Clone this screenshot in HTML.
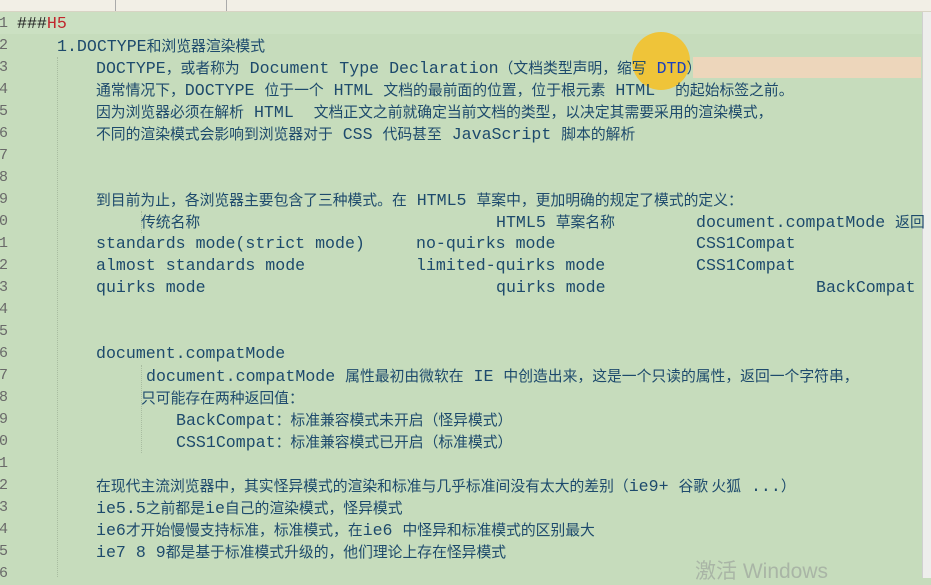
<!DOCTYPE html>
<html><head><meta charset="utf-8"><style>
html,body{margin:0;padding:0}
body{width:931px;height:578px;overflow:hidden;background:#c6dcbc;position:relative;font-family:"Liberation Mono","Noto Sans CJK SC",monospace;font-size:16.6px;color:#1d4a6c}
.tab{position:absolute;left:0;top:0;width:931px;height:11px;background:#f2efe6;border-bottom:1px solid #d8d4c4}
.l{position:absolute;height:22px;line-height:22px;white-space:pre}
.c{font-family:"Noto Sans CJK SC",sans-serif;font-size:14.8px}
.n{position:absolute;left:-4px;width:12px;text-align:right;color:#6a6a6a;font-size:15px;height:22px;line-height:22px}
.g{position:absolute;width:0;border-left:1px dotted #a8bca0}
</style></head><body>
<div class="tab"></div>
<div style="position:absolute;left:115px;top:0;width:1px;height:11px;background:#aaa"></div>
<div style="position:absolute;left:226px;top:0;width:1px;height:11px;background:#aaa"></div>
<div style="position:absolute;left:0;top:12px;width:922px;height:22px;background:#cbe0c2"></div>
<div style="position:absolute;left:693px;top:57px;width:228px;height:21px;background:#edd6bb"></div>
<div style="position:absolute;left:922px;top:12px;width:9px;height:566px;background:#eeeeec;border-left:1px solid #d0d0d0"></div>
<div style="position:absolute;left:632px;top:32px;width:58px;height:58px;border-radius:50%;background:#f3c12a;opacity:.9"></div>
<div class="g" style="left:57px;top:57px;height:520px"></div>
<div class="g" style="left:141px;top:211px;height:22px"></div>
<div class="g" style="left:141px;top:365px;height:88px"></div>

<div class="n" style="top:13px">1</div><div class="n" style="top:35px">2</div><div class="n" style="top:57px">3</div><div class="n" style="top:79px">4</div><div class="n" style="top:101px">5</div><div class="n" style="top:123px">6</div><div class="n" style="top:145px">7</div><div class="n" style="top:167px">8</div><div class="n" style="top:189px">9</div><div class="n" style="top:211px">0</div><div class="n" style="top:233px">1</div><div class="n" style="top:255px">2</div><div class="n" style="top:277px">3</div><div class="n" style="top:299px">4</div><div class="n" style="top:321px">5</div><div class="n" style="top:343px">6</div><div class="n" style="top:365px">7</div><div class="n" style="top:387px">8</div><div class="n" style="top:409px">9</div><div class="n" style="top:431px">0</div><div class="n" style="top:453px">1</div><div class="n" style="top:475px">2</div><div class="n" style="top:497px">3</div><div class="n" style="top:519px">4</div><div class="n" style="top:541px">5</div><div class="n" style="top:563px">6</div>

<div class="l" style="left:17px;top:13px;color:#222">###<span style="color:#c0272d">H5</span></div>
<div class="l" style="left:57px;top:35px">1.DOCTYPE<span class="c">和浏览器渲染模式</span></div>
<div class="l" style="left:96px;top:57px">DOCTYPE<span class="c">，或者称为</span> Document Type Declaration<span class="c">（文档类型声明，缩写</span> <span style="color:#1a3fbf">DTD</span><span class="c">）</span></div>
<div class="l" style="left:96px;top:79px"><span class="c">通常情况下，</span>DOCTYPE <span class="c">位于一个</span> HTML <span class="c">文档的最前面的位置，位于根元素</span> HTML  <span class="c">的起始标签之前。</span></div>
<div class="l" style="left:96px;top:101px"><span class="c">因为浏览器必须在解析</span> HTML  <span class="c">文档正文之前就确定当前文档的类型，以决定其需要采用的渲染模式，</span></div>
<div class="l" style="left:96px;top:123px"><span class="c">不同的渲染模式会影响到浏览器对于</span> CSS <span class="c">代码甚至</span> JavaScript <span class="c">脚本的解析</span></div>
<div class="l" style="left:96px;top:189px"><span class="c">到目前为止，各浏览器主要包含了三种模式。在</span> HTML5 <span class="c">草案中，更加明确的规定了模式的定义：</span></div>
<div class="l" style="left:141px;top:211px"><span class="c">传统名称</span></div>
<div class="l" style="left:496px;top:211px">HTML5 <span class="c">草案名称</span></div>
<div class="l" style="left:696px;top:211px">document.compatMode <span class="c">返回</span></div>
<div class="l" style="left:96px;top:233px">standards mode(strict mode)</div>
<div class="l" style="left:416px;top:233px">no-quirks mode</div>
<div class="l" style="left:696px;top:233px">CSS1Compat</div>
<div class="l" style="left:96px;top:255px">almost standards mode</div>
<div class="l" style="left:416px;top:255px">limited-quirks mode</div>
<div class="l" style="left:696px;top:255px">CSS1Compat</div>
<div class="l" style="left:96px;top:277px">quirks mode</div>
<div class="l" style="left:496px;top:277px">quirks mode</div>
<div class="l" style="left:816px;top:277px">BackCompat</div>
<div class="l" style="left:96px;top:343px">document.compatMode</div>
<div class="l" style="left:146px;top:365px">document.compatMode <span class="c">属性最初由微软在</span> IE <span class="c">中创造出来，这是一个只读的属性，返回一个字符串，</span></div>
<div class="l" style="left:141px;top:387px"><span class="c">只可能存在两种返回值：</span></div>
<div class="l" style="left:176px;top:409px">BackCompat<span class="c">：标准兼容模式未开启（怪异模式）</span></div>
<div class="l" style="left:176px;top:431px">CSS1Compat<span class="c">：标准兼容模式已开启（标准模式）</span></div>
<div class="l" style="left:96px;top:475px"><span class="c">在现代主流浏览器中，其实怪异模式的渲染和标准与几乎标准间没有太大的差别（</span>ie9+ <span class="c">谷歌 火狐</span> ...<span class="c">）</span></div>
<div class="l" style="left:96px;top:497px">ie5.5<span class="c">之前都是</span>ie<span class="c">自己的渲染模式，怪异模式</span></div>
<div class="l" style="left:96px;top:519px">ie6<span class="c">才开始慢慢支持标准，标准模式，在</span>ie6 <span class="c">中怪异和标准模式的区别最大</span></div>
<div class="l" style="left:96px;top:541px">ie7 8 9<span class="c">都是基于标准模式升级的，他们理论上存在怪异模式</span></div>
<div style="position:absolute;left:695px;top:555px;font-family:'Liberation Sans','Noto Sans CJK SC',sans-serif;font-size:21px;color:#a9b5a6">激活 Windows</div>
</body></html>
